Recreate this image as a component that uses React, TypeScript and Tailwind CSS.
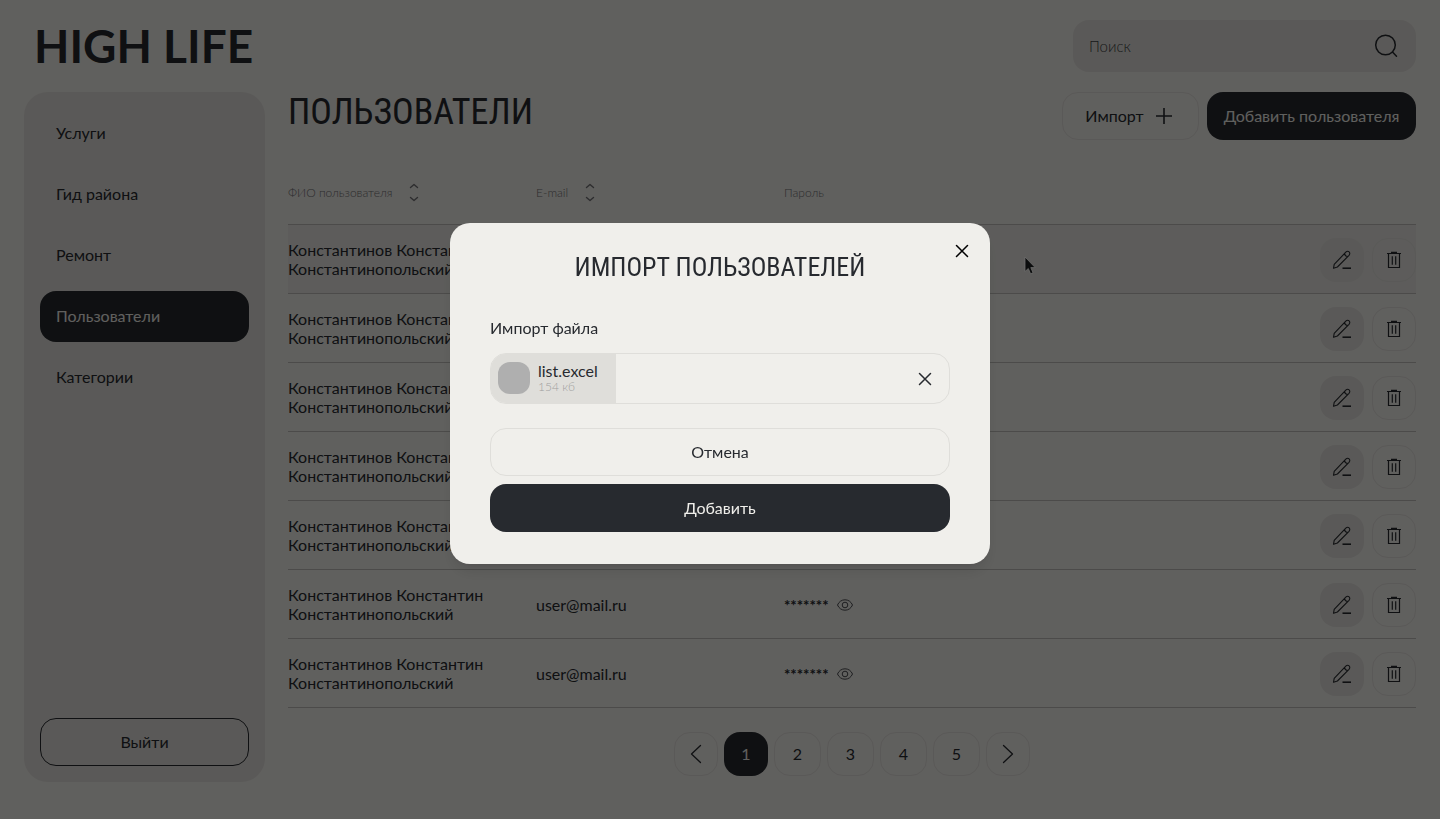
import React, { useState } from "react";

interface User {
  id: number;
  firstLine: string;
  secondLine: string;
  email: string;
  password: string;
}

interface ImportModalProps {
  isOpen: boolean;
  onClose: () => void;
}

const menu = ["Услуги", "Гид района", "Ремонт", "Пользователи", "Категории"];

const users: User[] = [1, 2, 3, 4, 5, 6, 7].map((id) => ({
  id,
  firstLine: "Константинов Константин",
  secondLine: "Константинопольский",
  email: "user@mail.ru",
  password: "*******",
}));

const CrossIcon = () => (
  <svg className="h-3.5 w-3.5" viewBox="0 0 14 14" fill="none" stroke="currentColor">
    <path strokeLinecap="round" strokeWidth="1.5" d="M1.5 1.5L12.5 12.5M12.5 1.5L1.5 12.5" />
  </svg>
);

const SortIcon = () => (
  <svg className="h-5 w-3" viewBox="0 0 12 20" fill="none" stroke="#707174">
    <path
      strokeLinecap="round"
      strokeLinejoin="round"
      strokeWidth="1.4"
      d="M2.5 4.5L6 1.5L9.5 4.5M2.5 14.5L6 17.5L9.5 14.5"
    />
  </svg>
);

const PencilIcon = () => (
  <svg className="h-5 w-5" viewBox="0 0 20 20" fill="none" stroke="currentColor">
    <path
      strokeLinejoin="round"
      strokeWidth="1.1"
      d="M1.5 18.3L2.2 14.3L13.8 2.2C14.9 1.1 16.2 1.1 17.1 1.9C18.1 2.8 18 4.2 17 5.3L5.4 17L1.5 18.3ZM12.6 3.5C12.7 5.3 13.8 6.4 15.8 6.5"
    />
    <path strokeWidth="1.6" d="M10.5 18.2H19" />
  </svg>
);

const TrashIcon = () => (
  <svg className="h-5 w-4" viewBox="0 0 16 20" fill="none" stroke="currentColor">
    <path strokeWidth="1.2" d="M2.5 3.5V17.5H13.5V3.5M1 3.5H15M5 2.3H11" />
    <path strokeWidth="1.2" d="M6.3 6.3V14.7M9.7 6.3V14.7" />
  </svg>
);

const EyeIcon = () => (
  <svg className="h-3 w-4" viewBox="0 0 16 12" fill="none" stroke="#4a4c50">
    <path d="M0.5 6C2 2.6 4.7 0.8 8 0.8C11.3 0.8 14 2.6 15.5 6C14 9.4 11.3 11.2 8 11.2C4.7 11.2 2 9.4 0.5 6Z" />
    <circle cx="8" cy="6" r="2.8" />
  </svg>
);

const ArrowIcon = ({ d }: { d: string }) => (
  <svg className="h-5 w-3" viewBox="0 0 12 20" fill="none" stroke="currentColor">
    <path strokeLinecap="round" strokeLinejoin="round" strokeWidth="1.3" d={d} />
  </svg>
);

const ImportModal: React.FC<ImportModalProps> = ({ isOpen, onClose }) => {
  const [file, setFile] = useState<string | null>("list.excel");
  if (!isOpen) return null;

  return (
    <div className="fixed inset-0 z-10 flex items-center justify-center bg-black/60 px-4 pb-8">
      <div
        role="dialog"
        aria-modal="true"
        aria-labelledby="import-title"
        className="relative w-full max-w-[540px] rounded-[20px] bg-[#f0efeb] px-10 pt-6 pb-8 shadow-lg"
      >
        <button
          onClick={onClose}
          aria-label="Закрыть"
          className="absolute top-3 right-3 flex h-8 w-8 items-center justify-center text-black"
        >
          <CrossIcon />
        </button>
        <h2
          id="import-title"
          className="text-center font-['Roboto_Condensed',sans-serif] text-[26px] leading-10 uppercase"
        >
          Импорт пользователей
        </h2>
        <p className="mt-[29px] text-base leading-6">Импорт файла</p>
        <div className="mt-[13px] flex h-[51px] items-center justify-between overflow-hidden rounded-2xl border border-[#dfdeda]">
          {file && (
            <div className="flex h-full items-center gap-2 bg-[#dfdeda] pr-[18px] pb-0.5 pl-[7px]">
              <span className="h-8 w-8 rounded-xl bg-[#afafaf]" />
              <span className="flex flex-col">
                <span className="text-base leading-[18px]">{file}</span>
                <span className="text-xs leading-[14px] font-light text-[#9f9f9f]">154 кб</span>
              </span>
            </div>
          )}
          <button
            onClick={() => setFile(null)}
            aria-label="Удалить файл"
            className="mr-2 flex h-8 w-8 items-center justify-center"
          >
            <CrossIcon />
          </button>
        </div>
        <div className="mt-6 flex flex-col gap-2">
          <button onClick={onClose} className="h-12 rounded-2xl border border-[#dfdeda]">
            Отмена
          </button>
          <button className="h-12 rounded-2xl bg-[#272a2f] text-[#f0efeb]">Добавить</button>
        </div>
      </div>
    </div>
  );
};

const App = () => {
  const [open, setOpen] = useState(true);

  return (
    <div className="flex min-h-screen flex-col bg-[#f0efeb] px-6 pt-5 pb-[37px] font-[Lato,'Noto_Sans',sans-serif] text-base text-[#272a2f]">
      <header className="flex items-center justify-between">
        <a
          href="#"
          className="ml-2.5 font-[Lato,sans-serif] text-[46px] leading-[52px] font-bold"
        >
          HIGH LIFE
        </a>
        <label className="flex h-[52px] w-[343px] items-center rounded-2xl bg-[#e1dfdb] pr-4 pl-4">
          <input
            type="text"
            aria-label="Поиск"
            placeholder="Поиск"
            className="min-w-0 flex-1 bg-transparent text-[15px] outline-none placeholder:font-light placeholder:text-[#3c3f44]"
          />
          <svg className="h-7 w-7" viewBox="0 0 28 28" fill="none" stroke="currentColor">
            <circle cx="13.5" cy="13" r="9.8" strokeWidth="1.5" />
            <path strokeLinecap="round" strokeWidth="1.5" d="M20.5 20L24.5 24.2" />
          </svg>
        </label>
      </header>

      <div className="mt-5 flex flex-1 gap-[23px]">
        <aside className="flex w-[241px] shrink-0 flex-col justify-between rounded-3xl bg-[#e1dfdb] p-4">
          <nav className="flex flex-col gap-2.5">
            {menu.map((item) => (
              <a
                key={item}
                href="#"
                className={
                  item === "Пользователи"
                    ? "flex h-[51px] items-center rounded-2xl bg-[#272a2f] px-4 pb-0.5 text-[#f0efeb]"
                    : "flex h-[51px] items-center rounded-2xl px-4 pb-0.5"
                }
              >
                {item}
              </a>
            ))}
          </nav>
          <button className="h-12 rounded-2xl border border-[#272a2f]">Выйти</button>
        </aside>

        <main className="min-w-0 flex-1">
          <div className="flex items-start justify-between">
            <h1 className="font-['Roboto_Condensed',sans-serif] text-4xl leading-10 uppercase">
              Пользователи
            </h1>
            <div className="flex gap-2">
              <button
                onClick={() => setOpen(true)}
                className="flex h-12 w-[137px] items-center justify-center gap-3 rounded-2xl border border-[#e1dfdb] pr-1"
              >
                Импорт
                <svg className="h-4 w-4" viewBox="0 0 16 16" stroke="currentColor">
                  <path strokeWidth="1.6" d="M8 0V16M0 8H16" />
                </svg>
              </button>
              <button className="h-12 w-[209px] rounded-2xl bg-[#272a2f] text-[#f0efeb]">
                Добавить пользователя
              </button>
            </div>
          </div>

          <table className="mt-5 w-full table-fixed border-collapse text-left">
            <thead>
              <tr className="h-16 border-b border-[#bdbcb9] text-xs text-[#707174]">
                <th className="w-[248px] p-0 pt-0.5 font-light">
                  <button className="flex items-center gap-4">
                    ФИО пользователя <SortIcon />
                  </button>
                </th>
                <th className="w-[248px] p-0 pt-0.5 font-light">
                  <button className="flex items-center gap-4">
                    E-mail <SortIcon />
                  </button>
                </th>
                <th className="p-0 pt-0.5 font-light">Пароль</th>
                <th className="w-24 p-0" aria-label="Действия" />
              </tr>
            </thead>
            <tbody>
              {users.map((user) => (
                <tr
                  key={user.id}
                  className="h-[69px] border-b border-[#bdbcb9] first:bg-[#e8e7e3]"
                >
                  <td className="p-0 leading-[19px]">
                    {user.firstLine}
                    <br />
                    {user.secondLine}
                  </td>
                  <td className="p-0 pt-0.5">{user.email}</td>
                  <td className="p-0 pt-0.5">
                    <div className="flex items-center gap-2">
                      <span className="text-[15px] leading-6 font-bold">{user.password}</span>
                      <button aria-label="Показать пароль">
                        <EyeIcon />
                      </button>
                    </div>
                  </td>
                  <td className="p-0 pt-0.5">
                    <div className="flex gap-2">
                      <button
                        aria-label="Изменить"
                        className="flex h-11 w-11 items-center justify-center rounded-2xl bg-[#e1dfdb]"
                      >
                        <PencilIcon />
                      </button>
                      <button
                        aria-label="Удалить"
                        className="flex h-11 w-11 items-center justify-center rounded-2xl border border-[#e1dfdb]"
                      >
                        <TrashIcon />
                      </button>
                    </div>
                  </td>
                </tr>
              ))}
            </tbody>
          </table>

          <div className="mt-6 flex justify-center gap-1.5">
            <button
              aria-label="Назад"
              className="flex h-11 w-11 items-center justify-center rounded-2xl border border-[#e1dfdb]"
            >
              <ArrowIcon d="M10.5 1.5L1.5 10L10.5 18.5" />
            </button>
            <button className="h-11 w-11 rounded-2xl bg-[#272a2f] text-[#f0efeb]">1</button>
            {[2, 3, 4, 5].map((page) => (
              <button key={page} className="h-11 w-[47px] rounded-2xl border border-[#e1dfdb]">
                {page}
              </button>
            ))}
            <button
              aria-label="Вперед"
              className="flex h-11 w-11 items-center justify-center rounded-2xl border border-[#e1dfdb]"
            >
              <ArrowIcon d="M1.5 1.5L10.5 10L1.5 18.5" />
            </button>
          </div>
        </main>
      </div>

      <ImportModal isOpen={open} onClose={() => setOpen(false)} />

      <svg
        className="pointer-events-none absolute top-[256px] left-[1024px] z-20 h-5 w-3"
        viewBox="0 0 12 20"
      >
        <path
          d="M1 1V15.5L4.3 12.5L6.6 17.8L9 16.8L6.8 11.6H11.2Z"
          fill="#0c0d0e"
          stroke="#70706e"
          strokeWidth="0.8"
        />
      </svg>
    </div>
  );
};

export default App;
